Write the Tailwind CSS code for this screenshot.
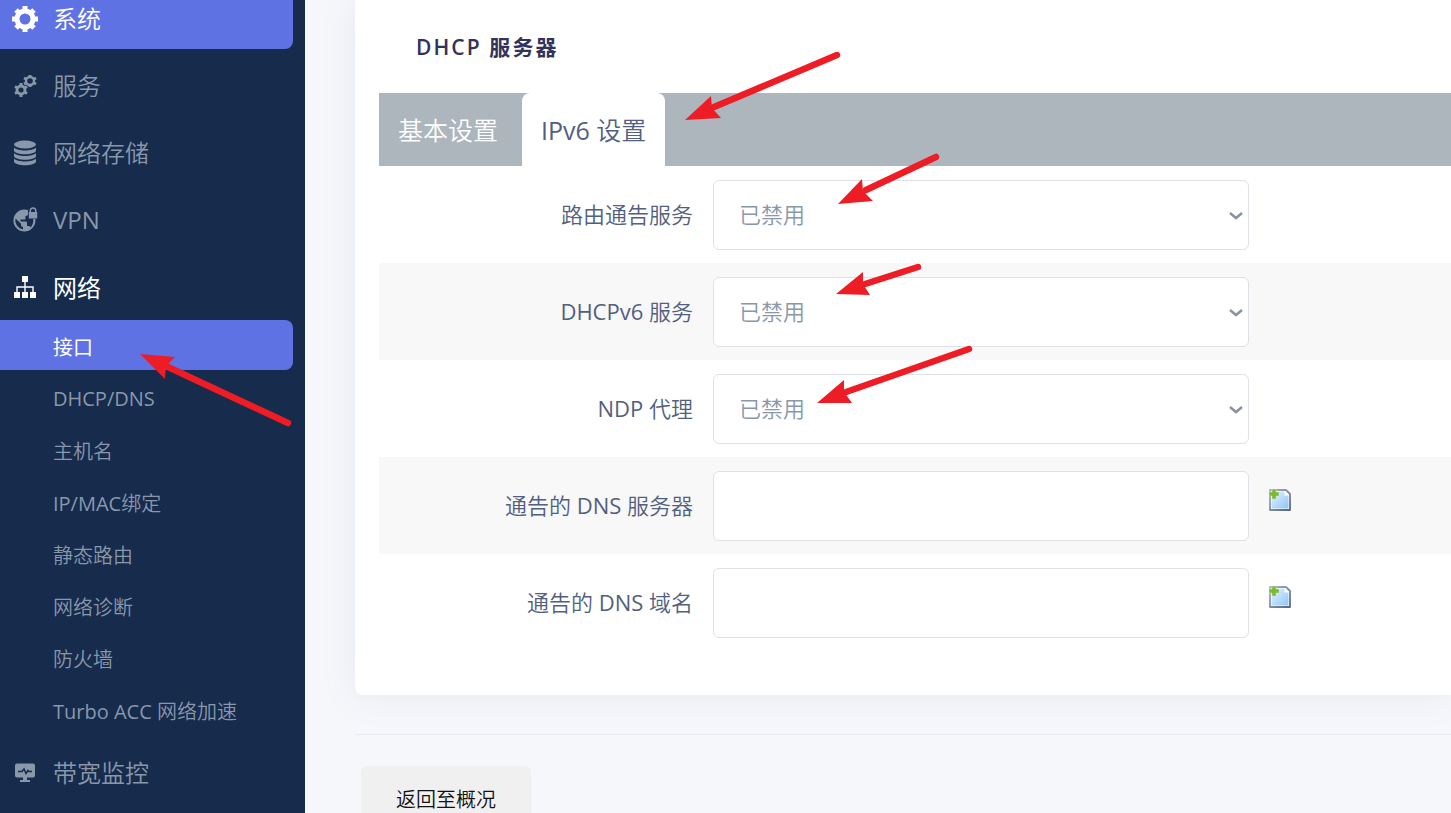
<!DOCTYPE html>
<html lang="zh-CN">
<head>
    <meta charset="UTF-8">
    <meta name="viewport" content="width=device-width, initial-scale=1.0">
    <title>DHCP 服务器</title>
    <script src="https://cdn.jsdelivr.net/npm/@tailwindcss/browser@4"></script>
</head>
<body class="bg-[#f6f7fb] font-['Open_Sans','Noto_Sans_CJK_SC_DemiLight','Noto_Sans_CJK_SC',sans-serif]">
    <div class="relative flex h-screen overflow-hidden">
        <!-- Sidebar -->
        <nav class="w-[305px] shrink-0 bg-[#172b4d] text-2xl text-[#8898aa]">
            <ul class="-mt-3 flex flex-col gap-[6px] pr-3">
                <li>
                    <a href="#" class="flex h-[61px] items-center gap-[15px] rounded-r-lg bg-[#5e72e4] pl-3 text-white">
                        <svg class="size-[26px]" viewBox="0 0 26 26" fill="none" stroke="currentColor">
                            <circle cx="13" cy="13" r="8" stroke-width="5"/>
                            <path stroke-width="5" stroke-linecap="butt" d="M13 0v5M13 21v5M0 13h5M21 13h5M4 4l3 3M19 19l3 3M22 4l-3 3M7 19l-3 3"/>
                        </svg>
                        系统
                    </a>
                </li>
                <li>
                    <a href="#" class="flex h-[61px] items-center gap-[15px] pl-3">
                        <svg class="size-[26px]" viewBox="0 0 26 26" fill="none" stroke="currentColor">
                            <circle cx="18" cy="8" r="4" stroke-width="2.4"/>
                            <path stroke-width="3" d="M18 2v2M18 12v2M12 5l2 1M22 10l2 1M24 5l-2 1M14 10l-2 1"/>
                            <circle cx="9" cy="17" r="4" stroke-width="2.8"/>
                            <path stroke-width="3" d="M9 10v3M9 21v3M3 13.5l2.5 1.5M12.5 19l2.5 1.5M15 13.5l-2.5 1.5M5.5 19l-2.5 1.5"/>
                        </svg>
                        服务
                    </a>
                </li>
                <li>
                    <a href="#" class="flex h-[61px] items-center gap-[15px] pl-3">
                        <svg class="size-[26px]" viewBox="0 0 26 26" fill="currentColor">
                            <ellipse cx="13" cy="4.5" rx="11" ry="4"/>
                            <path d="M2 7.5c3 4 19 4 22 0v3c-1 5-21 5-22 0zM2 13c3 4 19 4 22 0v3c-1 5-21 5-22 0zM2 18.5c3 4 19 4 22 0v3c-1 5-21 5-22 0z"/>
                        </svg>
                        网络存储
                    </a>
                </li>
                <li>
                    <a href="#" class="flex h-[61px] items-center gap-[15px] pl-3">
                        <svg class="size-[26px]" viewBox="0 0 26 26" fill="currentColor">
                            <path fill-rule="evenodd" d="M12.5 2.5c1.5 0 2.5.2 3.5.6v4c0 1.5-1 1.9-2.5 1.9v2.5c0 .8-.6 1-1.5 1H8.500v2h5c1 0 1.500.5 1.500 1.400v3h1.500c1 0 1.700.5 2 1.500 1.500-1.500 2.800-3.700 2.800-6.900l-.1-1.500h2.100l.1 1.500a11 11 0 1 1-10.900-11zM11 22.400V20c-1.200 0-2-.8-2-2v-1.200L3.500 11.500a9 9 0 0 0 7.500 10.900z"/>
                            <path fill-rule="evenodd" d="M17.5 5V3.700a3.500 3.500 0 0 1 7 0V5h.7v6.500h-8.400V5zM19 5h4V3.700a2 2 0 0 0-4 0z"/>
                        </svg>
                        VPN
                    </a>
                </li>
                <li>
                    <a href="#" class="flex h-[61px] items-center gap-[15px] pl-3 text-white">
                        <svg class="size-[26px]" viewBox="0 0 26 26" fill="currentColor">
                            <path d="M10 2h6v6h-6zM2 18h6v6H2zM10 18h6v6h-6zM18 18h6v6h-6zM12.3 8h1.4v4.3h8V18h-1.400v-4.300h-6.600V18h-1.400v-4.300H5.700V18H4.300v-5.700h8z"/>
                        </svg>
                        <span class="font-['Noto_Sans_CJK_SC',sans-serif]">网络</span>
                    </a>
                </li>
            </ul>
            <ul class="mt-[3px] mb-[5px] pr-3 text-xl">
                <li class="mb-[3px]"><a href="#" class="flex h-[50px] items-center rounded-r-lg bg-[#5e72e4] pt-1 pl-[53px] font-['Noto_Sans_CJK_SC',sans-serif] text-white">接口</a></li>
                <li><a href="#" class="flex h-[52px] items-center pl-[53px]">DHCP/DNS</a></li>
                <li><a href="#" class="flex h-[52px] items-center pt-0.5 pl-[53px]">主机名</a></li>
                <li><a href="#" class="flex h-[52px] items-center pt-0.5 pl-[53px]">IP/MAC绑定</a></li>
                <li><a href="#" class="flex h-[52px] items-center pt-0.5 pl-[53px]">静态路由</a></li>
                <li><a href="#" class="flex h-[52px] items-center pt-0.5 pl-[53px]">网络诊断</a></li>
                <li><a href="#" class="flex h-[52px] items-center pt-0.5 pl-[53px]">防火墙</a></li>
                <li><a href="#" class="flex h-[52px] items-center pt-0.5 pl-[53px]">Turbo ACC 网络加速</a></li>
            </ul>
            <a href="#" class="flex h-[61px] items-center gap-[15px] pl-3">
                <svg class="size-[26px]" viewBox="0 0 26 26" fill="currentColor">
                    <path d="M5 3.5h16a2 2 0 0 1 2 2v10a2 2 0 0 1-2 2H5a2 2 0 0 1-2-2v-10a2 2 0 0 1 2-2zM11 17h4v3h3v2H8v-2h3z"/>
                    <path fill="none" stroke="#172b4d" stroke-width="1.5" d="M6 11.5h4l2-2.5 2 4.5 2-3 1 1h3"/>
                </svg>
                带宽监控
            </a>
        </nav>

        <main class="min-w-0 flex-1 pl-[50px]">
            <section class="rounded-bl-lg bg-white pb-[44px] pl-6 shadow-[0_0_32px_rgba(136,152,170,0.15)]">
                <h3 class="flex h-[93px] items-center pt-0.5 pl-[37px] font-['Open_Sans','Noto_Sans_CJK_SC',sans-serif] text-[21px] font-semibold tracking-widest text-[#32325d]">DHCP 服务器</h3>

                <!-- Tabs -->
                <div class="flex h-[73px] gap-[5px] bg-[#adb5bd] text-[25px]">
                    <a href="#" class="flex items-center px-[19px] pt-0.5 text-white">基本设置</a>
                    <a href="#" class="flex items-center rounded-t-lg bg-white px-[19px] pt-0.5 text-[#525f7f]">IPv6 设置</a>
                </div>

                <form class="text-[22px] text-[#525f7f]">
                    <div class="flex h-[97px] items-center gap-5">
                        <label for="ra" class="w-[314px] text-right">路由通告服务</label>
                        <div class="relative w-[536px]">
                            <select id="ra" class="h-[70px] w-full appearance-none rounded-md border border-[#dee2e6] bg-white px-[25px] font-light text-[#8898aa]">
                                <option>已禁用</option>
                            </select>
                            <svg class="pointer-events-none absolute top-[30px] right-[5px] h-3 w-4" viewBox="0 0 16 12" fill="none" stroke="#8a929d" stroke-width="2.5"><path d="M2 3l6 5 6-5"/></svg>
                        </div>
                    </div>
                    <div class="flex h-[97px] items-center gap-5 bg-[#f8f8f9]">
                        <label for="dhcpv6" class="w-[314px] text-right">DHCPv6 服务</label>
                        <div class="relative w-[536px]">
                            <select id="dhcpv6" class="h-[70px] w-full appearance-none rounded-md border border-[#dee2e6] bg-white px-[25px] font-light text-[#8898aa]">
                                <option>已禁用</option>
                            </select>
                            <svg class="pointer-events-none absolute top-[30px] right-[5px] h-3 w-4" viewBox="0 0 16 12" fill="none" stroke="#8a929d" stroke-width="2.5"><path d="M2 3l6 5 6-5"/></svg>
                        </div>
                    </div>
                    <div class="flex h-[97px] items-center gap-5">
                        <label for="ndp" class="w-[314px] text-right">NDP 代理</label>
                        <div class="relative w-[536px]">
                            <select id="ndp" class="h-[70px] w-full appearance-none rounded-md border border-[#dee2e6] bg-white px-[25px] font-light text-[#8898aa]">
                                <option>已禁用</option>
                            </select>
                            <svg class="pointer-events-none absolute top-[30px] right-[5px] h-3 w-4" viewBox="0 0 16 12" fill="none" stroke="#8a929d" stroke-width="2.5"><path d="M2 3l6 5 6-5"/></svg>
                        </div>
                    </div>
                    <div class="flex h-[97px] items-center gap-5 bg-[#f8f8f9]">
                        <label for="dns" class="w-[314px] text-right">通告的 DNS 服务器</label>
                        <input id="dns" type="text" class="h-[70px] w-[536px] rounded-md border border-[#dee2e6] bg-white px-[25px] text-[#8898aa]">
                        <button type="button" aria-label="添加" class="mb-3">
                            <svg class="size-[22px]" viewBox="0 0 22 22">
                                <defs>
                                    <linearGradient id="sheet" x1="0" y1="0" x2="1" y2="1">
                                        <stop offset="0" stop-color="#e4f2ff"/>
                                        <stop offset="1" stop-color="#8fc6f7"/>
                                    </linearGradient>
                                    <linearGradient id="edge" x1="0" y1="0" x2="1" y2="1">
                                        <stop offset="0" stop-color="#a9b5c4"/>
                                        <stop offset="1" stop-color="#59677c"/>
                                    </linearGradient>
                                </defs>
                                <path fill="#fff" stroke="url(#edge)" stroke-width="1.8" stroke-linejoin="round" d="M1 1h16l4 4v16H1z"/>
                                <path fill="url(#sheet)" d="M2.5 2.5h13v4h4v13h-17z"/>
                                <path fill="#7cb83a" stroke="#cfe8b0" stroke-width=".5" d="M3 0h4v3h3v4H7v3H3V7H0V3h3z"/>
                            </svg>
                        </button>
                    </div>
                    <div class="flex h-[97px] items-center gap-5">
                        <label for="domain" class="w-[314px] text-right">通告的 DNS 域名</label>
                        <input id="domain" type="text" class="h-[70px] w-[536px] rounded-md border border-[#dee2e6] bg-white px-[25px] text-[#8898aa]">
                        <button type="button" aria-label="添加" class="mb-3">
                            <svg class="size-[22px]" viewBox="0 0 22 22">
                                <path fill="#fff" stroke="url(#edge)" stroke-width="1.8" stroke-linejoin="round" d="M1 1h16l4 4v16H1z"/>
                                <path fill="url(#sheet)" d="M2.5 2.5h13v4h4v13h-17z"/>
                                <path fill="#7cb83a" stroke="#cfe8b0" stroke-width=".5" d="M3 0h4v3h3v4H7v3H3V7H0V3h3z"/>
                            </svg>
                        </button>
                    </div>
                </form>
            </section>

            <hr class="mt-[39px] border-[#e9ebf2]">
            <div class="mt-[31px] pl-[6px]">
                <button type="button" class="h-[68px] w-[170px] rounded-md bg-[#f0f0f0] text-xl text-[#111]">返回至概况</button>
            </div>
        </main>

        <!-- Arrow annotations -->
        <svg class="pointer-events-none absolute top-0 left-0 h-[813px] w-[1451px] max-w-none" viewBox="0 0 1451 813" fill="#ee1c25">
            <path stroke="#ee1c25" stroke-width="6.5" stroke-linecap="round" d="M714 107L837 55M866 190L936 157M865 284L918 267M846 392L969 349M168 367L288 423"/>
            <path d="M685 120L711 96L712 108L721 118ZM838 204L862 179L863 191L873 201ZM836 294L863 272L863 284L870 295ZM817 403L844 380L844 392L852 403ZM140 354L175 357L166 366L165 379Z"/>
        </svg>
    </div>
</body>
</html>
